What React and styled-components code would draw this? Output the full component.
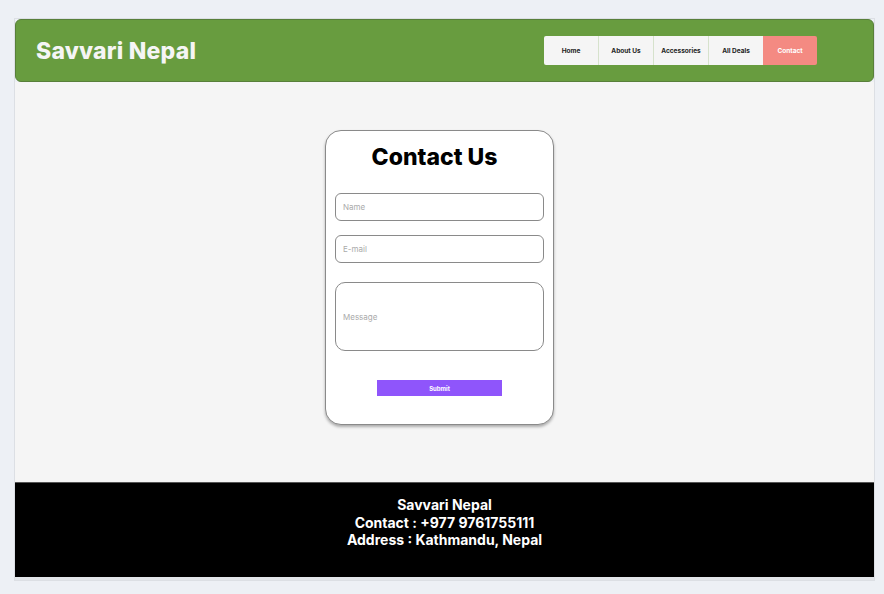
import styled, { createGlobalStyle } from "styled-components";

const Global = createGlobalStyle`
  body {
    margin: 0;
    background: #edf0f5;
    font-family: Inter, "Noto Sans", sans-serif;
  }
`;

const Frame = styled.div`
  margin: 18px 9px 0 14px;
  border: 1px solid #dcdfe4;
  display: flex;
  flex-direction: column;
`;

const Header = styled.header`
  height: 61px;
  background: #689c3f;
  border: 1px solid #587f3a;
  border-radius: 6px;
  display: flex;
  align-items: center;
  justify-content: space-between;
  padding: 0 56px 0 20px;
`;

const Logo = styled.h1`
  margin: 0;
  color: #f5f5f5;
  font-size: 23px;
  font-weight: 800;
  letter-spacing: 0.2px;
`;

const Nav = styled.nav`
  display: flex;
  height: 29px;
`;

const NavItem = styled.a`
  width: 54px;
  display: flex;
  align-items: center;
  justify-content: center;
  font-size: 6.5px;
  font-weight: 700;
  color: ${(p) => (p.$active ? "#fff" : "#222")};
  background: ${(p) => (p.$active ? "#f48a82" : "#f5f5f5")};
  border-left: ${(p) => (p.$first || p.$active ? "none" : "1px solid #d6e2cc")};
  border-radius: ${(p) => (p.$first ? "2px 0 0 2px" : p.$active ? "0 2px 2px 0" : "0")};
`;

const Main = styled.main`
  background: #f5f5f5;
  height: 400px;
  display: flex;
  justify-content: center;
  align-items: flex-start;
  padding-top: 48px;
  box-sizing: border-box;
`;

const Card = styled.form`
  width: 229px;
  height: 295px;
  box-sizing: border-box;
  background: #fff;
  border: 1px solid #8a8a8a;
  border-radius: 16px;
  box-shadow: 0 2px 3px rgba(0, 0, 0, 0.3);
  margin-right: 10px;
  padding: 12px 9px 0;
  display: flex;
  flex-direction: column;
`;

const Title = styled.h2`
  margin: 0 0 22px;
  padding-right: 10px;
  text-align: center;
  font-size: 23px;
  font-weight: 800;
  color: #000;
`;

const Field = styled.input`
  height: ${(p) => p.$h || 28}px;
  box-sizing: border-box;
  border: 1px solid #8a8a8a;
  border-radius: ${(p) => (p.$h ? 10 : 6)}px;
  padding: 0 7px;
  margin-bottom: ${(p) => p.$mb || 0}px;
  font-family: inherit;
  font-size: 8px;
  &::placeholder {
    color: #aaa;
  }
`;

const Submit = styled.button`
  align-self: center;
  margin-top: 29px;
  width: 125px;
  height: 16px;
  border: none;
  background: #8f55fb;
  color: #fff;
  font-family: inherit;
  font-size: 6px;
  font-weight: 700;
  padding: 0;
`;

const Footer = styled.footer`
  background: #000;
  height: 95px;
  border-top: 1px solid #555;
  box-sizing: border-box;
  display: flex;
  flex-direction: column;
  align-items: center;
  padding-top: 13px;
  color: #fff;
  font-size: 14px;
  font-weight: 700;
  line-height: 17.5px;
`;

const Strip = styled.div`
  height: 3px;
  background: #e3e6ea;
`;

const links = ["Home", "About Us", "Accessories", "All Deals", "Contact"];

export default function App() {
  return (
    <>
      <Global />
      <Frame>
        <Header>
          <Logo>Savvari Nepal</Logo>
          <Nav>
            {links.map((l, i) => (
              <NavItem key={l} $first={i === 0} $active={l === "Contact"}>
                {l}
              </NavItem>
            ))}
          </Nav>
        </Header>
        <Main>
          <Card onSubmit={(e) => e.preventDefault()}>
            <Title>Contact Us</Title>
            <Field placeholder="Name" $mb={14} />
            <Field placeholder="E-mail" $mb={19} />
            <Field placeholder="Message" $h={69} />
            <Submit>Submit</Submit>
          </Card>
        </Main>
        <Footer>
          <div>Savvari Nepal</div>
          <div>Contact : +977 9761755111</div>
          <div>Address : Kathmandu, Nepal</div>
        </Footer>
        <Strip />
      </Frame>
    </>
  );
}
